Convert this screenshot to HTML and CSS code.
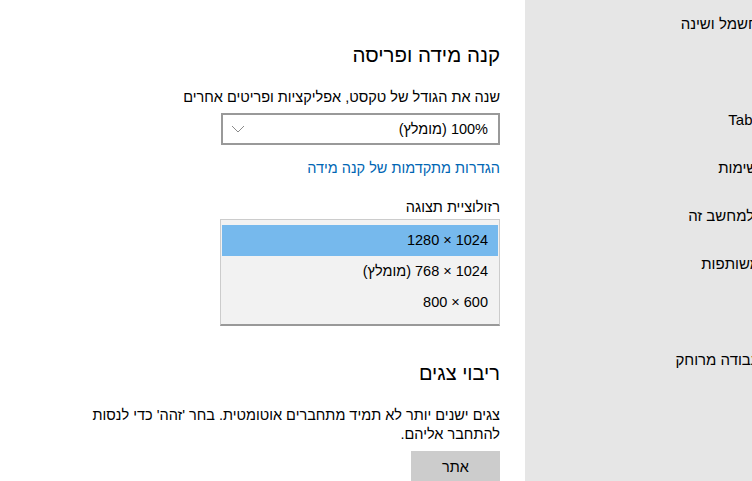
FILE: index.html
```html
<!DOCTYPE html>
<html lang="he">
<head>
<meta charset="utf-8">
<title>תצוגה</title>
<link rel="stylesheet" href="styles.css">
</head>
<body>
<div class="window">
  <main class="content" dir="rtl">
    <h1 class="title">קנה מידה ופריסה</h1>
    <div class="label">שנה את הגודל של טקסט, אפליקציות ופריטים אחרים</div>
    <div class="dropdown">
      <span class="dropdown-value">100% (מומלץ)</span>
      <svg class="chevron" width="14" height="8" viewBox="0 0 14 8"><path d="M1 1 L7 7 L13 1" fill="none" stroke="#8a8a8a" stroke-width="1"/></svg>
    </div>
    <a class="link" href="#">הגדרות מתקדמות של קנה מידה</a>
    <div class="label label-res">רזולוציית תצוגה</div>
    <div class="listbox">
      <div class="option selected"><bdi dir="ltr">1280 × 1024</bdi></div>
      <div class="option"><bdi dir="ltr">768 × 1024</bdi> (מומלץ)</div>
      <div class="option"><bdi dir="ltr">800 × 600</bdi></div>
    </div>
    <h2 class="title title-2">ריבוי צגים</h2>
    <p class="desc">צגים ישנים יותר לא תמיד מתחברים אוטומטית. בחר 'זהה' כדי לנסות להתחבר אליהם.</p>
    <button class="btn" type="button">אתר</button>
  </main>
  <nav class="sidebar" dir="rtl">
    <div class="nav-item">צריכת חשמל ושינה</div>
    <div class="nav-item">אחסון</div>
    <div class="nav-item">מצב Tablet</div>
    <div class="nav-item">ריבוי משימות</div>
    <div class="nav-item">הקרנה למחשב זה</div>
    <div class="nav-item">חוויות משותפות</div>
    <div class="nav-item">לוח</div>
    <div class="nav-item">שולחן עבודה מרוחק</div>
  </nav>
</div>
</body>
</html>
```
FILE: styles.css
```css
html, body {
  margin: 0;
  padding: 0;
  overflow: hidden;
}
body {
  width: 752px;
  height: 481px;
  background: #ffffff;
  font-family: "Liberation Sans", Arial, sans-serif;
  font-size: 14.5px;
  color: #000000;
}
.window {
  display: flex;
  width: 810px;
  height: 481px;
}
.content {
  flex: none;
  width: 525px;
  box-sizing: border-box;
  padding: 41px 25px 0 0;
  background: #ffffff;
}
.title {
  margin: 0;
  font-size: 20.5px;
  font-weight: normal;
  line-height: 28px;
}
.label {
  margin-top: 18px;
  line-height: 20px;
}
.dropdown {
  margin-top: 6px;
  width: 279px;
  height: 32px;
  box-sizing: border-box;
  border: 2px solid #999999;
  display: flex;
  align-items: center;
  justify-content: space-between;
  padding: 0 10px 0 8px;
}
.chevron {
  display: block;
}
.link {
  display: block;
  margin-top: 13px;
  line-height: 20px;
  color: #0066b4;
  text-decoration: none;
}
.label-res {
  margin-top: 19px;
}
.listbox {
  margin-top: 2px;
  width: 280px;
  box-sizing: border-box;
  background: #f2f2f2;
  border: 1px solid #cccccc;
  border-bottom: 2px solid #999999;
  padding: 5px 1px 6px;
}
.option {
  height: 31px;
  line-height: 31px;
  padding-right: 10px;
}
.option.selected {
  background: #76b9ed;
}
.title-2 {
  margin-top: 33px;
  font-size: 20px;
}
.desc {
  margin: 19px 0 0;
  max-width: 415px;
  line-height: 19px;
}
.btn {
  display: block;
  margin-top: 7px;
  width: 89px;
  height: 32px;
  border: none;
  background: #cccccc;
  font-family: inherit;
  font-size: 14.5px;
  color: #000000;
  padding: 0;
}
.sidebar {
  flex: none;
  width: 275px;
  box-sizing: border-box;
  background: #e6e6e6;
  padding-right: 0;
  font-size: 15px;
}
.nav-item {
  height: 48px;
  line-height: 48px;
  white-space: nowrap;
}
```
